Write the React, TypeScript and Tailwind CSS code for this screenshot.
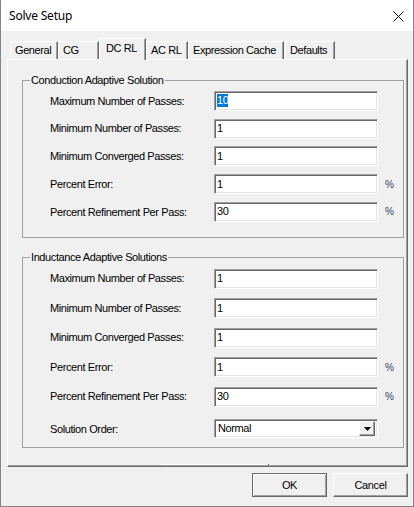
import React from "react";

type Row = { label: string; value: string; selected?: boolean; pct?: boolean };

const conduction: Row[] = [
  { label: "Maximum Number of Passes:", value: "10", selected: true },
  { label: "Minimum Number of Passes:", value: "1" },
  { label: "Minimum Converged Passes:", value: "1" },
  { label: "Percent Error:", value: "1", pct: true },
  { label: "Percent Refinement Per Pass:", value: "30", pct: true },
];

const inductance: Row[] = [
  { label: "Maximum Number of Passes:", value: "1" },
  { label: "Minimum Number of Passes:", value: "1" },
  { label: "Minimum Converged Passes:", value: "1" },
  { label: "Percent Error:", value: "1", pct: true },
  { label: "Percent Refinement Per Pass:", value: "30", pct: true },
];

const tabs = [
  { name: "General", w: "w-[48px]" },
  { name: "CG", w: "w-[41px]" },
  { name: "DC RL", w: "w-[47px]", active: true },
  { name: "AC RL", w: "w-[42px]" },
  { name: "Expression Cache", w: "w-[96px]" },
  { name: "Defaults", w: "w-[50px] ml-[1px]" },
];

const sunken =
  "bg-white border border-t-[#a0a0a0] border-l-[#a0a0a0] border-r-white border-b-white shadow-[inset_1px_1px_0_#696969,inset_-1px_-1px_0_#e3e3e3]";

function Field({ value, selected }: { value: string; selected?: boolean }) {
  return (
    <div className={`h-[20px] w-[164px] flex items-center pl-[2px] text-black ${sunken}`}>
      {selected ? (
        <span className="bg-[#0078d7] text-white leading-[13px]">{value}</span>
      ) : (
        <span className="leading-[13px]">{value}</span>
      )}
    </div>
  );
}

function FieldRow({ row, h }: { row: Row; h: string }) {
  return (
    <div className={`flex items-center pl-[27px] ${h}`}>
      <span className="w-[164px] text-black">{row.label}</span>
      <Field value={row.value} selected={row.selected} />
      {row.pct && <span className="ml-[7px] text-[10px] text-[#2e3f66]">%</span>}
    </div>
  );
}

function Tab({ name, w, active }: { name: string; w: string; active?: boolean }) {
  if (active) {
    return (
      <div
        className={`${w} relative z-10 -mb-[1px] h-[22px] bg-[#f0f0f0] border-l border-t border-r border-l-white border-t-white border-r-[#696969] shadow-[inset_-1px_0_0_#a0a0a0] pl-[6px] pt-[3px] leading-[13px] whitespace-nowrap`}
      >
        {name}
      </div>
    );
  }
  return (
    <div
      className={`${w} h-[18px] flex items-center border-l border-t border-r border-l-white border-t-white border-r-[#696969] shadow-[inset_-1px_0_0_#a0a0a0] pl-[4px] leading-[13px] whitespace-nowrap`}
    >
      {name}
    </div>
  );
}

export default function App() {
  return (
    <div className="w-[414px] h-[507px] flex flex-col bg-[#f0f0f0] border-x border-b border-[#858585] font-['Liberation_Sans',Arial,sans-serif] text-[11px] tracking-[-0.4px] text-black overflow-hidden">
      {/* title bar */}
      <div className="h-[31px] bg-white flex items-center justify-between pl-[8px] pr-[9px] shrink-0">
        <span className="text-[12px] tracking-[-0.2px] font-['Noto_Sans',sans-serif] text-black">Solve Setup</span>
        <svg width="11" height="11" viewBox="0 0 11 11" className="mt-[1px]">
          <path d="M0.5 0.5 L10.5 10.5 M10.5 0.5 L0.5 10.5" stroke="#111" strokeWidth="1" />
        </svg>
      </div>

      {/* tab strip */}
      <div className="h-[28px] flex items-end pl-[9px] shrink-0">
        {tabs.map((t) => (
          <Tab key={t.name} name={t.name} w={t.w} active={t.active} />
        ))}
      </div>

      {/* tab page */}
      <div className="ml-[6px] w-[401px] border border-t-white border-l-white border-r-[#696969] border-b-[#696969] shadow-[inset_-1px_-1px_0_#a0a0a0] pb-[1px] flex flex-col">
        <fieldset className="ml-[14px] mt-[14px] w-[382px] border border-[#a0a0a0] pt-[0px] pb-[11px]">
          <legend className="ml-[7px] px-[1px] leading-[13px]">Conduction Adaptive Solution</legend>
          {conduction.map((r) => (
            <FieldRow key={r.label} row={r} h="h-[27.75px]" />
          ))}
        </fieldset>

        <fieldset className="ml-[14px] mt-[13px] w-[382px] border border-[#a0a0a0] pb-[1px]">
          <legend className="ml-[7px] px-[1px] leading-[13px]">Inductance Adaptive Solutions</legend>
          {inductance.map((r) => (
            <FieldRow key={r.label} row={r} h="h-[29.5px]" />
          ))}
          <div className="flex items-center pl-[27px] h-[35px]">
            <span className="w-[164px]">Solution Order:</span>
            <div className={`h-[19px] w-[164px] flex items-center justify-between pl-[3px] pr-[2px] ${sunken}`}>
              <span className="leading-[13px]">Normal</span>
              <div className="h-[15px] w-[16px] flex items-center justify-center bg-[#f0f0f0] border border-t-white border-l-white border-r-[#696969] border-b-[#696969] shadow-[inset_-1px_-1px_0_#a0a0a0]">
                <svg width="7" height="4" viewBox="0 0 7 4">
                  <path d="M0 0 H7 L3.5 4 Z" fill="#000" />
                </svg>
              </div>
            </div>
          </div>
        </fieldset>

        <div className="mt-[16px] ml-[153px] h-[1px] w-[107px] bg-white flex justify-end">
          <div className="w-[1px] h-[1px] bg-[#555] translate-x-[1px]" />
        </div>
      </div>

      {/* dialog buttons */}
      <div className="mt-[6px] flex justify-end gap-[6px] pr-[5px]">
        <button className="w-[75px] h-[24px] bg-[#f0f0f0] border border-[#696969] shadow-[inset_1px_1px_0_#fff,inset_-1px_-1px_0_#a0a0a0] text-[11px] text-black">
          OK
        </button>
        <button className="w-[75px] h-[24px] bg-[#f0f0f0] border border-t-white border-l-white border-r-[#696969] border-b-[#696969] shadow-[inset_-1px_-1px_0_#a0a0a0] text-[11px] text-black">
          Cancel
        </button>
      </div>
    </div>
  );
}
